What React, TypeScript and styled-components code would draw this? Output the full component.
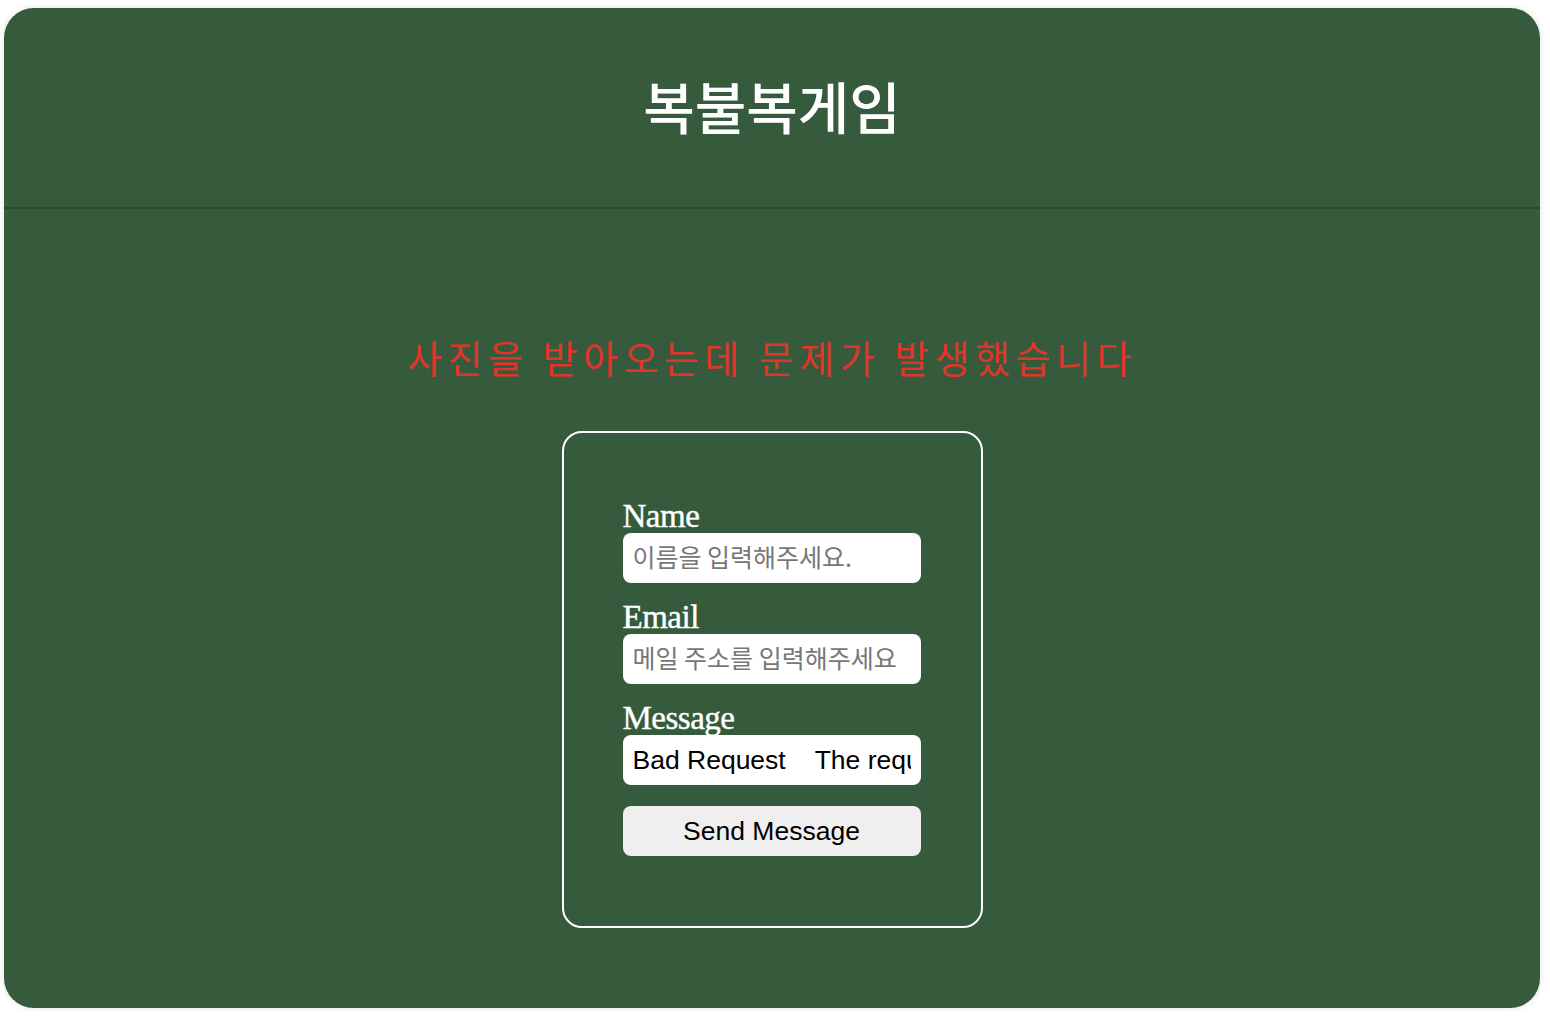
import React from "react";
import styled, { createGlobalStyle } from "styled-components";

const Global = createGlobalStyle`
  html, body { margin: 0; padding: 0; background: #ffffff; }
  body { font-family: "Liberation Serif", serif; }
  * { box-sizing: border-box; }
`;

const Card = styled.div`
  margin: 8px 10px 10px 4px;
  height: 1000px;
  background: #355b3c;
  border-radius: 30px;
  box-shadow: 0 0 6px rgba(0, 0, 0, 0.12);
  display: flex;
  flex-direction: column;
  overflow: hidden;
`;

const Header = styled.header`
  height: 201px;
  border-bottom: 2px solid #284a2f;
  display: flex;
  align-items: center;
  justify-content: center;
`;

const Title = styled.h1`
  margin: 0 0 6px 0;
  font-family: "Noto Sans CJK KR", "Noto Sans", sans-serif;
  font-weight: 500;
  font-size: 56px;
  color: #ffffff;
  letter-spacing: 0;
`;

const Main = styled.main`
  display: flex;
  flex-direction: column;
  align-items: center;
  padding-top: 122px;
`;

const ErrorText = styled.p`
  margin: 0;
  font-family: "Noto Sans CJK KR", sans-serif;
  font-weight: 400;
  font-size: 38px;
  line-height: 52px;
  letter-spacing: 5.5px;
  color: #e0352b;
`;

const FormBox = styled.form`
  margin-top: 48px;
  width: 421px;
  height: 497px;
  border: 2px solid #ffffff;
  border-radius: 20px;
  padding: 66px 0 0 59px;
  display: flex;
  flex-direction: column;
`;

const Label = styled.label`
  font-family: "Liberation Serif", serif;
  font-size: 33px;
  line-height: 34px;
  color: #ffffff;
  letter-spacing: -0.5px;
  -webkit-text-stroke: 0.4px #ffffff;
`;

const Input = styled.input`
  width: 298px;
  height: 50px;
  border: none;
  border-radius: 8px;
  background: #ffffff;
  padding: 0 10px;
  font-family: "Liberation Sans", "Noto Sans CJK KR", sans-serif;
  font-size: 26.5px;
  color: #000000;
  margin-bottom: 17px;
  outline: none;
  &::placeholder {
    color: #777777;
    font-family: "Noto Sans CJK KR", sans-serif;
    font-size: 25px;
  }
`;

const Button = styled.button`
  width: 298px;
  height: 50px;
  margin-top: 4px;
  border: none;
  border-radius: 8px;
  background: #efefef;
  font-family: "Liberation Sans", sans-serif;
  font-size: 26.5px;
  color: #000000;
`;

export default function App() {
  return (
    <>
      <Global />
      <Card>
        <Header>
          <Title>복불복게임</Title>
        </Header>
        <Main>
          <ErrorText>사진을 받아오는데 문제가 발생했습니다</ErrorText>
          <FormBox onSubmit={(e) => e.preventDefault()}>
            <Label htmlFor="name">Name</Label>
            <Input id="name" placeholder="이름을 입력해주세요." />
            <Label htmlFor="email">Email</Label>
            <Input id="email" placeholder="메일 주소를 입력해주세요" />
            <Label htmlFor="message">Message</Label>
            <Input
              id="message"
              defaultValue="Bad Request    The request could not be understood by the server."
            />
            <Button type="submit">Send Message</Button>
          </FormBox>
        </Main>
      </Card>
    </>
  );
}
